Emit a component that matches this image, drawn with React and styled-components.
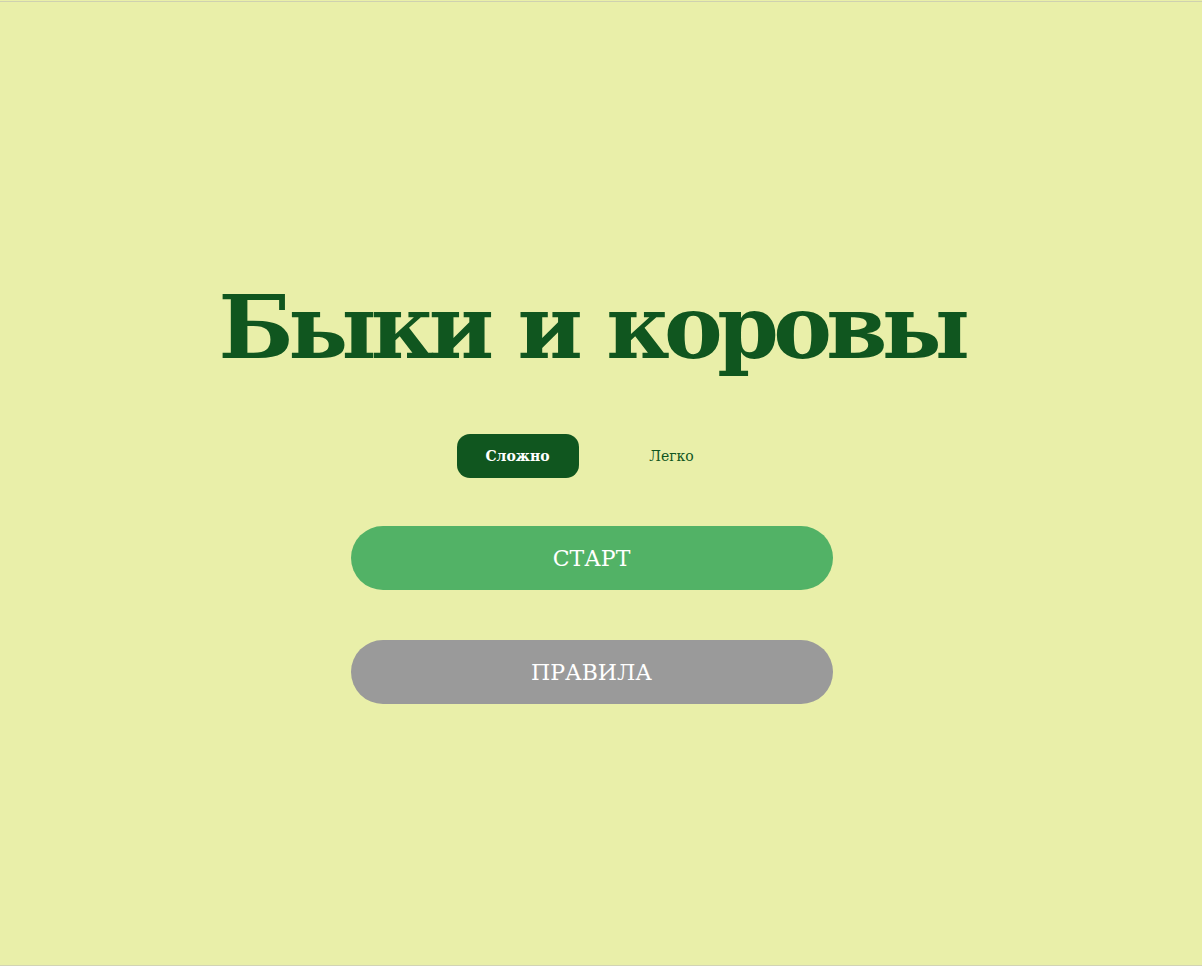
import React, { useState } from 'react';
import styled, { createGlobalStyle } from 'styled-components';

const GlobalStyle = createGlobalStyle`
  html, body {
    margin: 0;
    padding: 0;
    background-color: #e9efa9;
  }
  body {
    font-family: "DejaVu Serif", "Liberation Serif", serif;
  }
`;

const Screen = styled.div`
  display: flex;
  flex-direction: column;
  align-items: center;
  height: 966px;
  padding-right: 19px;
  box-sizing: border-box;
  border-top: 1px solid #e9efa9;
  border-bottom: 1px solid #d2d4b4;
  overflow: hidden;

  &::before {
    content: '';
    display: block;
    width: calc(100% + 19px);
    margin-right: -19px;
    height: 1px;
    background-color: #cfd1b0;
  }
`;

const Title = styled.h1`
  margin: 272px 0 0;
  font-size: 88px;
  font-weight: 700;
  line-height: 106px;
  color: #10561f;
  letter-spacing: -5.6px;
  word-spacing: 4px;
`;

const Modes = styled.div`
  display: flex;
  align-items: center;
  gap: 32px;
  margin-top: 54px;
  margin-left: 6px;
`;

const Mode = styled.button`
  width: 122px;
  height: 44px;
  border: none;
  border-radius: 13px;
  font-family: inherit;
  font-size: 14px;
  font-weight: ${(p) => (p.active ? 700 : 400)};
  color: ${(p) => (p.active ? '#ffffff' : '#10561f')};
  background-color: ${(p) => (p.active ? '#10561f' : 'transparent')};
  cursor: pointer;
`;

const Actions = styled.div`
  display: flex;
  flex-direction: column;
  gap: 50px;
  margin-top: 48px;
`;

const Action = styled.button`
  width: 482px;
  height: 64px;
  border: none;
  border-radius: 32px;
  font-family: inherit;
  font-size: 22px;
  color: #ffffff;
  background-color: ${(p) => p.color};
  cursor: pointer;
`;

export default function App() {
  const [mode, setMode] = useState('hard');

  return (
    <>
      <GlobalStyle />
      <Screen>
        <Title>Быки и коровы</Title>
        <Modes>
          <Mode active={mode === 'hard'} onClick={() => setMode('hard')}>Сложно</Mode>
          <Mode active={mode === 'easy'} onClick={() => setMode('easy')}>Легко</Mode>
        </Modes>
        <Actions>
          <Action color="#52b266">СТАРТ</Action>
          <Action color="#9a9a9a">ПРАВИЛА</Action>
        </Actions>
      </Screen>
    </>
  );
}
